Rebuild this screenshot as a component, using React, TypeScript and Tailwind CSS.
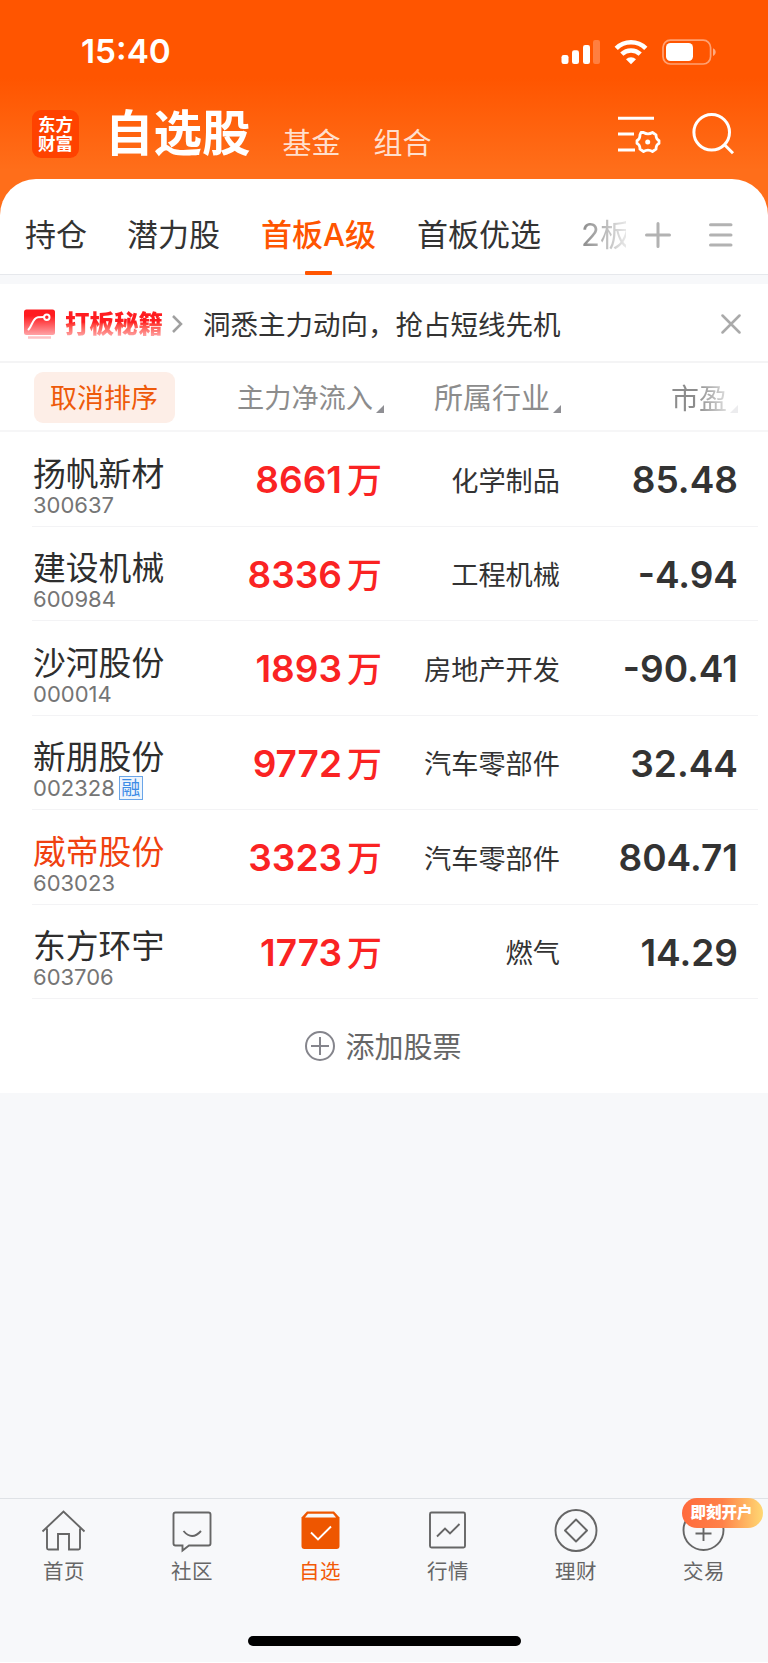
import React from 'react';

interface Stock {
  name: string;
  code: string;
  inflow: string;
  industry: string;
  pe: string;
  margin?: boolean;
  highlight?: boolean;
}

const stocks: Stock[] = [
  { name: '扬帆新材', code: '300637', inflow: '8661', industry: '化学制品', pe: '85.48' },
  { name: '建设机械', code: '600984', inflow: '8336', industry: '工程机械', pe: '-4.94' },
  { name: '沙河股份', code: '000014', inflow: '1893', industry: '房地产开发', pe: '-90.41' },
  { name: '新朋股份', code: '002328', inflow: '9772', industry: '汽车零部件', pe: '32.44', margin: true },
  { name: '威帝股份', code: '603023', inflow: '3323', industry: '汽车零部件', pe: '804.71', highlight: true },
  { name: '东方环宇', code: '603706', inflow: '1773', industry: '燃气', pe: '14.29' },
];

const StatusBar: React.FC = () => (
  <div className="flex h-[103px] items-center justify-between pl-[81px] pr-[52px] text-white">
    <span className="mt-[-2px] text-[33.3px] leading-[40px] font-semibold">15:40</span>
    <svg width="156" height="30" viewBox="560 36 156 30" fill="#fff">
      <rect x="561.5" y="54" width="7" height="9" rx="2.2" />
      <rect x="572" y="49.3" width="7" height="13.7" rx="2.2" />
      <rect x="583" y="44" width="7" height="19" rx="2.2" />
      <rect x="593" y="39" width="7" height="24" rx="2.2" opacity=".25" />
      <g fill="none" stroke="#fff" strokeWidth="4.6">
        <path d="M616.2 47.3a21 21 0 0 1 29.6 0" />
        <path d="M621.8 53.2a13.2 13.2 0 0 1 18.4 0" />
      </g>
      <path d="M626 58.2a7.2 7.2 0 0 1 10 0l-5 5z" />
      <rect x="663" y="39.2" width="47.6" height="23.8" rx="7.4" fill="none" stroke="#fff" strokeWidth="1.7" opacity=".45" />
      <rect x="666" y="42" width="27" height="18" rx="4.5" />
      <path d="M713 47.2c3.6 1.2 3.6 6.6 0 7.8z" opacity=".5" />
    </svg>
  </div>
);

const TitleBar: React.FC = () => (
  <div className="flex h-[76px] items-start text-white">
    <div className="mt-[7px] ml-[32px] flex h-[48px] w-[47px] flex-col items-center justify-center rounded-[9px] bg-[#ff4200] text-[17.5px] leading-[19.5px] font-bold">
      <span>东方</span>
      <span>财富</span>
    </div>
    <span className="mt-[1px] ml-[26px] text-[48.5px] leading-[60px] font-bold">自选股</span>
    <span className="mt-[21px] ml-[32px] text-[29px] leading-[40px] text-[#ffdfcd]">基金</span>
    <span className="mt-[21px] ml-[33px] text-[29px] leading-[40px] text-[#ffdfcd]">组合</span>
    <svg className="mt-[7px] ml-auto mr-[32px]" width="120" height="48" viewBox="616 110 120 48" fill="none" stroke="#fff" strokeWidth="3">
      <path d="M618 118.3h36M618 134h16M618 150h17" />
      {/* gear, six lobes */}
      <path
        d="M641 132.5h2.500q4.500 2.600 9 0l3.500 2.300q0 4.500 3 5.700v3q-3 1.200-3 5.700l-3.500 2.300q-4.500-2.600-9 0l-3.500-2.300q0-4.500-3-5.700v-3q3-1.200 3-5.700z"
        transform="translate(0 0)"
        strokeWidth="2.8"
        strokeLinejoin="round"
      />
      <circle cx="647.7" cy="142" r="2.5" fill="#fff" stroke="none" />
      <circle cx="711.7" cy="132.3" r="17.8" />
      <path d="M724.5 144.8l8.5 8.5" />
    </svg>
  </div>
);

const Tabs: React.FC = () => (
  <div className="flex h-[96px] items-start rounded-t-[36px] border-b border-[#e6e8ec] bg-white pt-[36px] text-[31px] leading-[40px] text-[#333]">
    <span className="ml-[25px]">持仓</span>
    <span className="ml-[40px]">潜力股</span>
    <div className="relative ml-[41px] font-medium text-[#ff5500]">
      首板A级
      <div className="absolute top-[56px] left-[44px] h-[4px] w-[27px] rounded-[1px] bg-[#ff5500]" />
    </div>
    <span className="ml-[41px]">首板优选</span>
    <span className="ml-[40px] w-[45px] overflow-hidden bg-gradient-to-r from-[#8a8a8a] to-[#e8e8e8] bg-clip-text whitespace-nowrap text-transparent">2板</span>
    <svg className="ml-[18px]" width="90" height="40" viewBox="644 215 90 40" fill="none" stroke="#b2b2b2" strokeWidth="3" strokeLinecap="round">
      <path d="M646.5 235h23M658 223.5v23M710.5 224.7h20.5M710.5 235h20.5M710.5 245h20.5" />
    </svg>
  </div>
);

const Banner: React.FC = () => (
  <div className="flex h-[79px] items-center border-b-2 border-[#f4f4f5] bg-white">
    <svg className="ml-[23px]" width="34" height="32" viewBox="23 307 34 32">
      <defs>
        <linearGradient id="red" x1="0" y1="0" x2="0" y2="1">
          <stop offset="0.25" stopColor="#ff1c20" />
          <stop offset="1" stopColor="#ffa3a6" />
        </linearGradient>
      </defs>
      <rect x="24" y="309.5" width="31" height="25.5" rx="2.5" fill="url(#red)" />
      <path d="M28.5 329.5c4-4 4-11.5 9.5-12.3l6-.2" fill="none" stroke="#fff" strokeWidth="2" strokeLinecap="round" />
      <circle cx="46.8" cy="317.3" r="2.7" fill="none" stroke="#fff" strokeWidth="2" />
      <path d="M28 337.5h23" stroke="#ffc2c4" strokeWidth="2.5" />
    </svg>
    <span className="mt-[2px] ml-[8px] bg-gradient-to-b from-[#ff1c20] from-45% to-[#ffa3a6] to-85% bg-clip-text text-[24.5px] leading-[36px] font-black text-transparent">打板秘籍</span>
    <svg className="mt-[2px] ml-[8px]" width="14" height="20" viewBox="0 0 14 20" fill="none" stroke="#a0a0a0" strokeWidth="2.5">
      <path d="M2 2l8 8-8 8" />
    </svg>
    <span className="mt-[5px] ml-[18px] text-[27.5px] leading-[40px] text-[#333]">洞悉主力动向，抢占短线先机</span>
    <svg className="mt-[3px] ml-auto mr-[27px]" width="20" height="20" viewBox="0 0 20 20" fill="none" stroke="#aaa" strokeWidth="2.5" strokeLinecap="round">
      <path d="M1.5 1.5l17 17M18.5 1.5l-17 17" />
    </svg>
  </div>
);

const SortMark: React.FC<{ color: string }> = ({ color }) => (
  <svg className="mt-[19px] ml-[3px] shrink-0" width="8" height="8" viewBox="0 0 8 8">
    <path d="M8 0v8H0z" fill={color} />
  </svg>
);

const ColumnHeader: React.FC = () => (
  <div className="flex h-[69px] items-center border-b-2 border-[#f6f6f7] bg-white pt-[5px] text-[27px] leading-[40px] text-[#8c8c8c]">
    <div className="mt-[-3px] ml-[34px] flex h-[51px] w-[141px] items-center justify-center rounded-[9px] bg-[#fdeee7] pt-[3px] pr-[1px] text-[#ee5a0a]">取消排序</div>
    <div className="flex w-[209px] items-center justify-end text-[27.2px]">
      主力净流入
      <SortMark color="#8f8f94" />
    </div>
    <div className="flex w-[177px] items-center justify-end text-[29px]">
      所属行业
      <SortMark color="#8f8f94" />
    </div>
    <div className="flex w-[177px] items-center justify-end">
      <span className="bg-gradient-to-r from-[#8c8c8c] from-45% to-[#dedede] bg-clip-text text-[28px] text-transparent">市盈</span>
      <SortMark color="#ececee" />
    </div>
  </div>
);

const StockRow: React.FC<{ stock: Stock }> = ({ stock }) => (
  <div className="mr-[10px] ml-[32px] flex flex-1 border-b border-[#f3f3f5]">
    <div className="w-[168px] pl-[1px]">
      <div className={`mt-[20.5px] text-[32.8px] leading-[42px] ${stock.highlight ? 'text-[#f0410f]' : 'text-[#2e2e2e]'}`}>{stock.name}</div>
      <div className="mt-[-2px] flex h-[24px] items-center text-[22px] leading-[22px] text-[#757575]">
        {stock.code}
        {stock.margin && (
          <span className="ml-[4px] flex h-[24px] w-[24px] items-center justify-center border border-[#6aa5e8] bg-[#eef5fd] pt-[1px] text-[19px] text-[#3d8be6]">融</span>
        )}
      </div>
    </div>
    <div className="mt-[24px] flex w-[182px] items-baseline justify-end leading-[48px] text-[#fa2323]">
      <span className="text-[37px] font-semibold">{stock.inflow}</span>
      <span className="ml-[5px] text-[35px] font-medium">万</span>
    </div>
    <div className="mt-[29.5px] w-[178px] text-right text-[27.2px] leading-[40px] text-[#333]">{stock.industry}</div>
    <div className="mt-[24px] w-[178px] text-right text-[37px] leading-[48px] font-semibold text-[#333]">{stock.pe}</div>
  </div>
);

const navItems = [
  {
    label: '首页',
    icon: <path d="M1.5 21.5L22.5 1.5 43.5 21.5M6 18.5V38q0 1.5 1.5 1.5H17V24h11v15.5h9.5Q39 39.5 39 38V18.5" />,
  },
  {
    label: '社区',
    icon: <path d="M6.5 2.5h33q2 0 2 2v29q0 2-2 2H20l-6.5 5v-5h-7q-2 0-2-2v-29q0-2 2-2zM14.5 21q8.5 10 17.5 0" />,
  },
  {
    label: '自选',
    active: true,
    icon: (
      <>
        <path d="M10 1.5h27l5.5 6V36q0 3-3 3H7.5q-3 0-3-3V7.5z" fill="#ee5600" stroke="none" />
        <path d="M11 3.800h25l3 3.700H8z" fill="#f7f8fa" stroke="none" />
        <path d="M14 22.5l7 7L34 16.5" stroke="#fff" />
      </>
    ),
  },
  {
    label: '行情',
    icon: (
      <>
        <rect x="5" y="2.5" width="35" height="35" rx="1.5" />
        <path d="M12 26.5l8-8 5 5 9.5-9.5" />
      </>
    ),
  },
  {
    label: '理财',
    icon: (
      <>
        <circle cx="23" cy="20.5" r="20.5" />
        <path d="M23 9.5L34 20.5 23 31.5 12 20.5z" strokeLinejoin="round" />
      </>
    ),
  },
  {
    label: '交易',
    badge: '即刻开户',
    icon: (
      <>
        <circle cx="22.5" cy="20" r="20" />
        <path d="M22.5 13v18M14.5 23.5h16" />
      </>
    ),
  },
];

const BottomNav: React.FC = () => (
  <div className="h-[164px] border-t border-[#dfe2e6]">
    <div className="grid grid-cols-6">
      {navItems.map((item) => (
        <div key={item.label} className={`relative flex flex-col items-center ${item.active ? 'text-[#f35a07]' : 'text-[#666]'}`}>
          <svg className="mt-[11px] mr-[2px] overflow-visible" width="45" height="42" viewBox="0 0 45 42" fill="none" stroke="currentColor" strokeWidth="1.9">
            {item.icon}
          </svg>
          <span className="mt-[5px] text-[20.5px] leading-[30px] tracking-[0.5px]">{item.label}</span>
          {item.badge && (
            <span className="absolute top-[-1px] left-[42px] h-[30px] w-[81px] rounded-full bg-gradient-to-r from-[#ff6a3c] via-[#ff8149] to-[#ffd873] pr-[2px] text-center text-[15.5px] leading-[30px] font-black text-white">
              {item.badge}
            </span>
          )}
        </div>
      ))}
    </div>
    <div className="mx-auto mt-[49px] h-[10px] w-[273px] rounded-full bg-black" />
  </div>
);

export default function App() {
  return (
    <div className="h-[1663px] w-[768px] overflow-hidden bg-white">
      <div className="flex h-[1662px] flex-col bg-[#f7f8fa] font-['Inter','Noto_Sans_CJK_SC',sans-serif]">
        <div className="bg-[linear-gradient(180deg,#ff5500_0px,#ff5500_78px,#ff6e1a_170px,#ff6e1a_100%)]">
          <StatusBar />
          <TitleBar />
          <Tabs />
        </div>
        <div className="h-[9px]" />
        <Banner />
        <ColumnHeader />
        <div className="flex h-[567px] flex-col bg-white">
          {stocks.map((stock) => (
            <StockRow key={stock.code} stock={stock} />
          ))}
        </div>
        <div className="flex h-[94px] items-center justify-center bg-white text-[29px] leading-[40px] text-[#666]">
          <svg className="mr-[10px]" width="30" height="30" viewBox="0 0 30 30" fill="none" stroke="#85858c" strokeWidth="2">
            <circle cx="15" cy="15" r="14" />
            <path d="M15 6v18M6 15h18" />
          </svg>
          <span className="mt-[4px] mr-[1px]">添加股票</span>
        </div>
        <div className="flex-1" />
        <BottomNav />
      </div>
    </div>
  );
}
